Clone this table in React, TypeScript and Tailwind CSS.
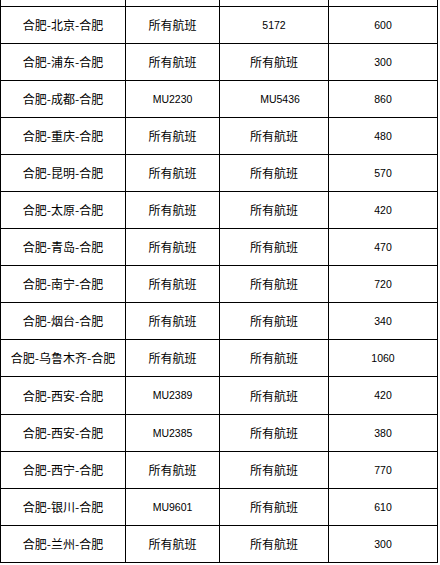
import React from 'react';

type Row = { route: string; out: string; back: string; price: string; backShift?: boolean };

const rows: Row[] = [
  { route: '合肥-北京-合肥', out: '所有航班', back: '5172', price: '600' },
  { route: '合肥-浦东-合肥', out: '所有航班', back: '所有航班', price: '300' },
  { route: '合肥-成都-合肥', out: 'MU2230', back: 'MU5436', price: '860', backShift: true },
  { route: '合肥-重庆-合肥', out: '所有航班', back: '所有航班', price: '480' },
  { route: '合肥-昆明-合肥', out: '所有航班', back: '所有航班', price: '570' },
  { route: '合肥-太原-合肥', out: '所有航班', back: '所有航班', price: '420' },
  { route: '合肥-青岛-合肥', out: '所有航班', back: '所有航班', price: '470' },
  { route: '合肥-南宁-合肥', out: '所有航班', back: '所有航班', price: '720' },
  { route: '合肥-烟台-合肥', out: '所有航班', back: '所有航班', price: '340' },
  { route: '合肥-乌鲁木齐-合肥', out: '所有航班', back: '所有航班', price: '1060' },
  { route: '合肥-西安-合肥', out: 'MU2389', back: '所有航班', price: '420' },
  { route: '合肥-西安-合肥', out: 'MU2385', back: '所有航班', price: '380' },
  { route: '合肥-西宁-合肥', out: '所有航班', back: '所有航班', price: '770' },
  { route: '合肥-银川-合肥', out: 'MU9601', back: '所有航班', price: '610' },
  { route: '合肥-兰州-合肥', out: '所有航班', back: '所有航班', price: '300' },
];

const cjk = "font-['Noto_Sans_CJK_SC',sans-serif] text-[12px]";
const latin = "font-['Liberation_Sans',Arial,sans-serif] text-[10.5px]";

const isLatin = (s: string) => /^[A-Z0-9]+$/.test(s);

function Cell({ text, width, shift }: { text: string; width: string; shift?: boolean }) {
  return (
    <div
      className={`${width} shrink-0 flex items-center justify-center border-r border-black text-black leading-none ${
        isLatin(text) ? latin : cjk
      } ${shift ? 'pl-[12px]' : ''}`}
    >
      {text}
    </div>
  );
}

export default function App() {
  return (
    <div className="w-[440px] h-[565px] overflow-hidden bg-white">
      <div className="w-[438px] border-l border-black">
        <div className="flex h-[7px] border-b border-black">
          <div className="w-[125px] border-r border-black" />
          <div className="w-[94px] border-r border-black" />
          <div className="w-[109px] border-r border-black" />
          <div className="w-[109px] border-r border-black" />
        </div>
        {rows.map((r, i) => (
          <div key={i} className={`flex ${i === 10 ? 'h-[38px]' : 'h-[37px]'} border-b border-black`}>
            <Cell text={r.route} width="w-[125px]" />
            <Cell text={r.out} width="w-[94px]" />
            <Cell text={r.back} width="w-[109px]" shift={r.backShift} />
            <Cell text={r.price} width="w-[109px]" />
          </div>
        ))}
      </div>
    </div>
  );
}
